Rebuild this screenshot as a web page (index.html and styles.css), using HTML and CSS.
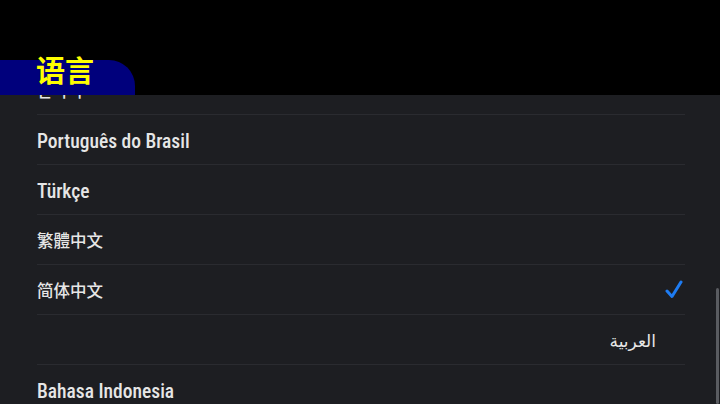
FILE: index.html
```html
<!DOCTYPE html>
<html lang="zh">
<head>
<meta charset="utf-8">
<link rel="stylesheet" href="styles.css">
</head>
<body>
<div class="screen">
  <header class="header">
    <div class="tab"></div>
    <h1 class="title">语言</h1>
  </header>
  <section class="panel">
    <ul class="list">
      <li class="row"><span class="label ko">한국어</span></li>
      <li class="row"><span class="label latin">Português do Brasil</span></li>
      <li class="row"><span class="label latin">Türkçe</span></li>
      <li class="row"><span class="label cjk" lang="zh-TW">繁體中文</span></li>
      <li class="row selected"><span class="label cjk">简体中文</span>
        <svg class="check" viewBox="0 0 18 19" width="18" height="19"><path d="M2 11 L7 16.5 L16 2" fill="none" stroke="#1e7cf2" stroke-width="3" stroke-linecap="round" stroke-linejoin="round"/></svg>
      </li>
      <li class="row rtl"><span class="label ar" dir="rtl">العربية</span></li>
      <li class="row"><span class="label latin">Bahasa Indonesia</span></li>
    </ul>
    <div class="scrollbar"></div>
  </section>
</div>
</body>
</html>
```

FILE: styles.css
```css
html, body {
  margin: 0;
  padding: 0;
  background: #000;
}
.screen {
  width: 720px;
  height: 404px;
  overflow: hidden;
  display: flex;
  flex-direction: column;
  font-family: Roboto, "Noto Sans", "DejaVu Sans", "Noto Sans CJK SC", sans-serif;
}
.header {
  position: relative;
  height: 95px;
  flex: none;
  background: #000;
  display: flex;
  align-items: flex-end;
}
.tab {
  width: 135px;
  height: 35px;
  background: #00007c;
  border-top-right-radius: 26px;
}
.title {
  position: absolute;
  left: 36px;
  top: 49px;
  margin: 0;
  font-family: "Noto Sans CJK SC", sans-serif;
  font-size: 29px;
  font-weight: 700;
  line-height: 40px;
  color: #ffff00;
}
.panel {
  position: relative;
  flex: 1;
  background: #1d1e22;
  overflow: hidden;
}
.list {
  list-style: none;
  margin: -30px 0 0 0;
  padding: 0 35px 0 37px;
}
.row {
  height: 50px;
  display: flex;
  align-items: center;
  justify-content: space-between;
  border-bottom: 1px solid #2a2b30;
  box-sizing: border-box;
  color: #e6e6e6;
}
.label {
  display: block;
}
.label.latin {
  font-family: Roboto, "Noto Sans", sans-serif;
  font-size: 19.5px;
  font-weight: 500;
  font-stretch: 78%;
  padding-top: 3px;
}
.label.cjk {
  font-family: "Noto Sans CJK SC", sans-serif;
  font-size: 16.5px;
  font-weight: 500;
}
.label.cjk:lang(zh-TW) {
  font-family: "Noto Sans CJK TC", "Noto Sans CJK SC", sans-serif;
}
.label.ko {
  font-family: "Noto Sans CJK KR", sans-serif;
  font-size: 16.5px;
  font-weight: 500;
}
.row.rtl {
  justify-content: flex-end;
  padding-right: 29px;
}
.label.ar {
  font-family: "DejaVu Sans", sans-serif;
  font-size: 17px;
  font-weight: 400;
  padding-top: 3px;
}
.check {
  display: block;
  margin-right: 2px;
}
.scrollbar {
  position: absolute;
  right: 1px;
  top: 193px;
  bottom: 0;
  width: 3px;
  background: #5a5c61;
  border-radius: 2px;
}
```
